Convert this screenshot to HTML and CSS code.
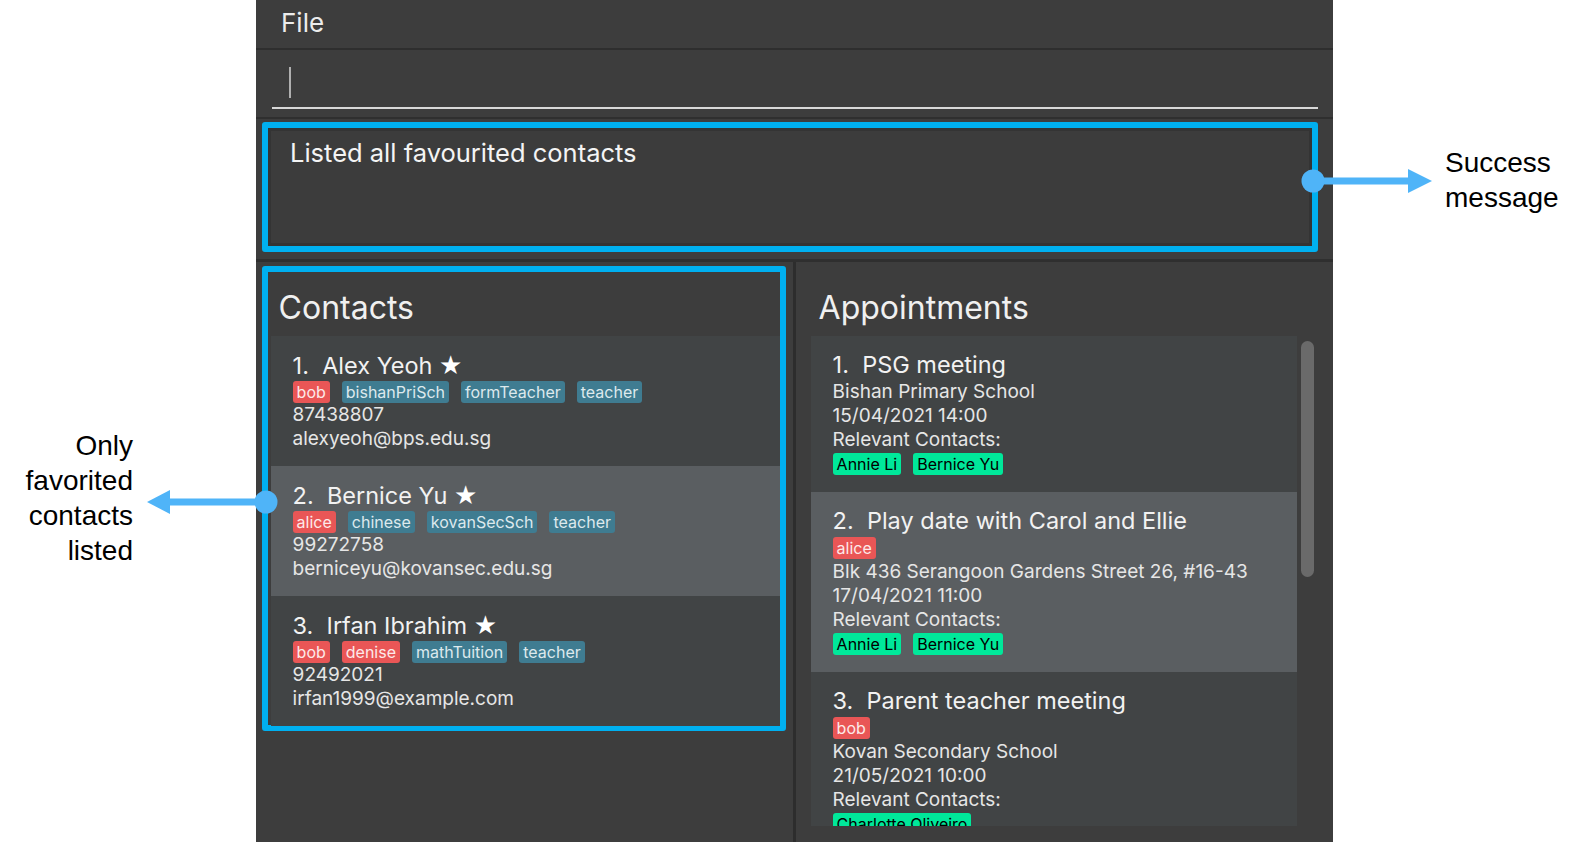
FILE: index.html
```html
<!DOCTYPE html>
<html lang="en">
<head>
<meta charset="utf-8">
<title>Favourite contacts</title>
<link rel="stylesheet" href="styles.css">
</head>
<body>
<div class="page">
  <div class="note note-left">Only<br>favorited<br>contacts<br>listed</div>

  <div class="app">
    <div class="menubar">File</div>

    <div class="command">
      <div class="input"><div class="caret"></div></div>
    </div>

    <div class="result-section">
      <div class="result-box">Listed all favourited contacts</div>
    </div>

    <div class="lists">
      <div class="pane pane-left">
        <div class="pane-box highlight">
          <div class="heading">Contacts</div>
          <div class="clist">
            <div class="card even">
              <div class="name">1.  Alex Yeoh <span class="star">★</span></div>
              <div class="tags"><span class="tag red">bob</span><span class="tag teal">bishanPriSch</span><span class="tag teal">formTeacher</span><span class="tag teal">teacher</span></div>
              <div class="line">87438807</div>
              <div class="line">alexyeoh@bps.edu.sg</div>
            </div>
            <div class="card odd">
              <div class="name">2.  Bernice Yu <span class="star">★</span></div>
              <div class="tags"><span class="tag red">alice</span><span class="tag teal">chinese</span><span class="tag teal">kovanSecSch</span><span class="tag teal">teacher</span></div>
              <div class="line">99272758</div>
              <div class="line">berniceyu@kovansec.edu.sg</div>
            </div>
            <div class="card even">
              <div class="name">3.  Irfan Ibrahim <span class="star">★</span></div>
              <div class="tags"><span class="tag red">bob</span><span class="tag red">denise</span><span class="tag teal">mathTuition</span><span class="tag teal">teacher</span></div>
              <div class="line">92492021</div>
              <div class="line">irfan1999@example.com</div>
            </div>
          </div>
        </div>
      </div>

      <div class="divider"></div>

      <div class="pane pane-right">
        <div class="pane-box">
          <div class="heading">Appointments</div>
          <div class="alist">
            <div class="acards">
              <div class="acard even">
                <div class="name">1.  PSG meeting</div>
                <div class="line">Bishan Primary School</div>
                <div class="line">15/04/2021 14:00</div>
                <div class="line">Relevant Contacts:</div>
                <div class="arow"><span class="tag green">Annie Li</span><span class="tag green">Bernice Yu</span></div>
              </div>
              <div class="acard odd">
                <div class="name">2.  Play date with Carol and Ellie</div>
                <div class="arow"><span class="tag red">alice</span></div>
                <div class="line">Blk 436 Serangoon Gardens Street 26, #16-43</div>
                <div class="line">17/04/2021 11:00</div>
                <div class="line">Relevant Contacts:</div>
                <div class="arow"><span class="tag green">Annie Li</span><span class="tag green">Bernice Yu</span></div>
              </div>
              <div class="acard even">
                <div class="name">3.  Parent teacher meeting</div>
                <div class="arow"><span class="tag red">bob</span></div>
                <div class="line">Kovan Secondary School</div>
                <div class="line">21/05/2021 10:00</div>
                <div class="line">Relevant Contacts:</div>
                <div class="arow"><span class="tag green">Charlotte Oliveiro</span></div>
              </div>
            </div>
            <div class="scroll"><div class="thumb"></div></div>
          </div>
        </div>
      </div>
    </div>
  </div>

  <div class="note note-right">Success<br>message</div>
</div>

<svg class="arrows" width="1583" height="844" viewBox="0 0 1583 844" aria-hidden="true">
  <g fill="#4fb4f8" stroke="none">
    <rect x="1313" y="177.5" width="97" height="7"/>
    <polygon points="1408,169 1432,181 1408,193"/>
    <circle cx="1313" cy="181" r="11.5"/>
    <rect x="168" y="498.5" width="98" height="7"/>
    <polygon points="170,490 147,502 170,514"/>
    <circle cx="266" cy="502" r="11.5"/>
  </g>
</svg>
</body>
</html>
```

FILE: styles.css
```css
* { box-sizing: border-box; }

body {
  margin: 0;
  background: #ffffff;
  width: 1583px;
  height: 844px;
  overflow: hidden;
  position: relative;
  font-family: Inter, "Noto Sans", sans-serif;
}

.page {
  display: flex;
  height: 844px;
}

.note {
  font-family: "Liberation Sans", Arial, sans-serif;
  font-size: 28px;
  line-height: 35px;
  color: #000;
}

.note-left {
  width: 256px;
  padding: 428px 123px 0 0;
  text-align: right;
}

.note-right {
  flex: 1;
  padding: 145px 0 0 112px;
}

.app {
  width: 1077px;
  height: 842px;
  background: #3d3d3d;
  color: #f2f2f2;
  display: flex;
  flex-direction: column;
}

.menubar {
  height: 50px;
  flex: none;
  border-bottom: 2px solid #2e2e2e;
  padding-left: 25px;
  font-size: 26px;
  line-height: 46px;
  color: #ececec;
}

.command {
  height: 69px;
  flex: none;
  padding: 17px 15px 0 16px;
  border-bottom: 2px solid #2f2f2f;
}

.input {
  height: 42px;
  border-bottom: 2px solid #d8d8d8;
  padding-left: 17px;
}

.caret {
  width: 2px;
  height: 31px;
  background: #b0b0b0;
}

.result-section {
  height: 143px;
  flex: none;
  border-bottom: 3px solid #2f2f2f;
  padding: 3px 15px 0 6px;
}

.result-box {
  height: 130px;
  border: 6px solid #00b0f0;
  border-radius: 3px;
  background: #3c3c3c;
  box-shadow: inset 0 0 0 3px #343434;
  padding: 10px 0 0 22px;
  font-size: 25.5px;
  line-height: 30px;
  color: #f4f4f4;
}

.lists {
  flex: 1;
  display: flex;
  min-height: 0;
}

.pane-left {
  width: 537px;
  flex: none;
}

.divider {
  width: 3px;
  flex: none;
  background: #2d2d2d;
}

.pane-right {
  flex: 1;
  min-width: 0;
}

.pane-box {
  margin: 4px 7px 0 6px;
  border: 6px solid transparent;
  border-radius: 3px;
  padding-left: 2.6px;
}

.pane-box.highlight {
  border-color: #00b0f0;
  height: 465px;
}

.pane-right .pane-box {
  margin-right: 15px;
}

.heading {
  height: 64px;
  padding: 16px 0 0 8px;
  font-size: 32px;
  line-height: 40px;
  color: #f0f0f0;
}

.clist {
  width: 509px;
}

.card {
  height: 130px;
  padding: 14px 0 0 22px;
}

.even { background: #414445; }
.odd { background: #5a5e61; }

.name {
  font-size: 23.5px;
  line-height: 30px;
  white-space: pre;
  color: #f2f2f2;
}

.star {
  font-family: "DejaVu Sans", sans-serif;
  font-size: 26px;
  color: #ffffff;
}

.tags {
  display: flex;
  gap: 12px;
  height: 22px;
  align-items: center;
}

.tag {
  font-size: 16px;
  line-height: 22px;
  height: 22px;
  padding: 0 4px;
  border-radius: 3px;
  white-space: nowrap;
}

.red { background: #e95656; color: #fde9e9; }
.teal { background: #3f7c91; color: #dde9ed; }
.green { background: #00e89a; color: #000; }

.line {
  font-size: 19px;
  line-height: 24px;
  color: #e6e6e6;
}

.alist {
  display: flex;
  height: 490px;
}

.acards {
  width: 486px;
  flex: none;
  overflow: hidden;
}

.acard {
  padding: 14px 0 16px 22px;
}

.arow {
  display: flex;
  gap: 12px;
  height: 24px;
  align-items: center;
}

.scroll {
  flex: 1;
  padding: 5px 0 0 4.4px;
}

.thumb {
  width: 13px;
  height: 236px;
  border-radius: 7px;
  background: #6a6a6a;
}

.arrows {
  position: absolute;
  left: 0;
  top: 0;
  pointer-events: none;
}
```
